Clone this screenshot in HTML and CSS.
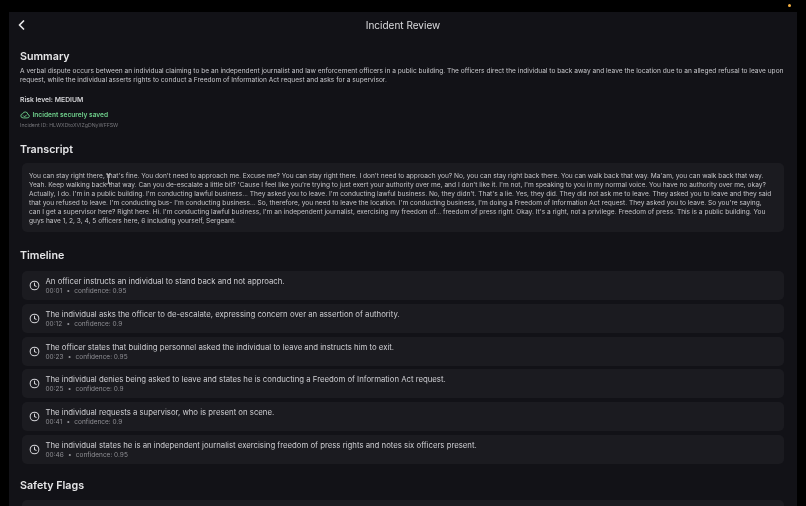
FILE: index.html
```html
<!DOCTYPE html>
<html lang="en">
<head>
<meta charset="utf-8">
<title>Incident Review</title>
<link rel="stylesheet" href="styles.css">
</head>
<body>
<span class="status-dot"></span>
<main class="panel">
  <header class="topbar">
    <svg class="back" viewBox="0 0 7 10" width="7" height="10"><path d="M5.5 1 1.5 5l4 4" fill="none" stroke="#e8e8ea" stroke-width="1.7" stroke-linecap="round" stroke-linejoin="round"/></svg>
    <h1 class="title">Incident Review</h1>
  </header>
  <section class="summary">
    <h2 class="heading">Summary</h2>
    <p class="summary-text">A verbal dispute occurs between an individual claiming to be an independent journalist and law enforcement officers in a public building. The officers direct the individual to back away and leave the location due to an alleged refusal to leave upon request, while the individual asserts rights to conduct a Freedom of Information Act request and asks for a supervisor.</p>
    <p class="risk">Risk level: MEDIUM</p>
    <div class="saved">
      <svg viewBox="0 0 24 24" width="10" height="10" fill="none" stroke="#6fd08c" stroke-width="2.2" stroke-linecap="round" stroke-linejoin="round"><path d="M7 19a5 5 0 0 1-.6-9.96A6.5 6.5 0 0 1 19 10.5a4.3 4.3 0 0 1-1 8.5z"/><path d="m8.5 14 2.5 2.5 4.5-4.5"/></svg>
      <span>Incident securely saved</span>
    </div>
    <p class="incident-id">Incident ID: HLWXDtoXVIZgDNyWFFSW</p>
  </section>
  <section class="transcript">
    <h2 class="heading">Transcript</h2>
    <div class="card transcript-card">You can stay right there, that's fine. You don't need to approach me. Excuse me? You can stay right there. I don't need to approach you? No, you can stay right back there. You can walk back that way. Ma'am, you can walk back that way. Yeah. Keep walking back that way. Can you de-escalate a little bit? 'Cause I feel like you're trying to just exert your authority over me, and I don't like it. I'm not, I'm speaking to you in my normal voice. You have no authority over me, okay? Actually, I do. I'm in a public building. I'm conducting lawful business... They asked you to leave. I'm conducting lawful business. No, they didn't. That's a lie. Yes, they did. They did not ask me to leave. They asked you to leave and they said that you refused to leave. I'm conducting bus- I'm conducting business... So, therefore, you need to leave the location. I'm conducting business, I'm doing a Freedom of Information Act request. They asked you to leave. So you're saying, can I get a supervisor here? Right here. Hi. I'm conducting lawful business, I'm an independent journalist, exercising my freedom of... freedom of press right. Okay. It's a right, not a privilege. Freedom of press. This is a public building. You guys have 1, 2, 3, 4, 5 officers here, 6 including yourself, Sergeant.</div>
  </section>
  <section class="timeline">
    <h2 class="heading">Timeline</h2>
    <ul class="events">
      <li class="card event">
        <svg class="clock" viewBox="0 0 24 24"><circle cx="12" cy="12" r="9.5"/><path d="M12 6.5V12l3.5 2"/></svg>
        <div><p class="event-text">An officer instructs an individual to stand back and not approach.</p><p class="event-meta"><span>00:01</span><span>•</span><span>confidence: 0.95</span></p></div>
      </li>
      <li class="card event">
        <svg class="clock" viewBox="0 0 24 24"><circle cx="12" cy="12" r="9.5"/><path d="M12 6.5V12l3.5 2"/></svg>
        <div><p class="event-text">The individual asks the officer to de-escalate, expressing concern over an assertion of authority.</p><p class="event-meta"><span>00:12</span><span>•</span><span>confidence: 0.9</span></p></div>
      </li>
      <li class="card event">
        <svg class="clock" viewBox="0 0 24 24"><circle cx="12" cy="12" r="9.5"/><path d="M12 6.5V12l3.5 2"/></svg>
        <div><p class="event-text">The officer states that building personnel asked the individual to leave and instructs him to exit.</p><p class="event-meta"><span>00:23</span><span>•</span><span>confidence: 0.95</span></p></div>
      </li>
      <li class="card event">
        <svg class="clock" viewBox="0 0 24 24"><circle cx="12" cy="12" r="9.5"/><path d="M12 6.5V12l3.5 2"/></svg>
        <div><p class="event-text">The individual denies being asked to leave and states he is conducting a Freedom of Information Act request.</p><p class="event-meta"><span>00:25</span><span>•</span><span>confidence: 0.9</span></p></div>
      </li>
      <li class="card event">
        <svg class="clock" viewBox="0 0 24 24"><circle cx="12" cy="12" r="9.5"/><path d="M12 6.5V12l3.5 2"/></svg>
        <div><p class="event-text">The individual requests a supervisor, who is present on scene.</p><p class="event-meta"><span>00:41</span><span>•</span><span>confidence: 0.9</span></p></div>
      </li>
      <li class="card event">
        <svg class="clock" viewBox="0 0 24 24"><circle cx="12" cy="12" r="9.5"/><path d="M12 6.5V12l3.5 2"/></svg>
        <div><p class="event-text">The individual states he is an independent journalist exercising freedom of press rights and notes six officers present.</p><p class="event-meta"><span>00:46</span><span>•</span><span>confidence: 0.95</span></p></div>
      </li>
    </ul>
  </section>
  <section class="flags">
    <h2 class="heading">Safety Flags</h2>
    <div class="card flag-card"></div>
  </section>
</main>
<svg class="cursor" viewBox="0 0 7 12" width="7" height="12"><path d="M1 .8c1 0 2 .3 2.500 1 .5-.7 1.500-1 2.500-1M3.500 1.800v8.400M1 11.200c1 0 2-.3 2.500-1 .5.700 1.500 1 2.500 1" fill="none" stroke="#c9c9cc" stroke-width=".8"/></svg>
</body>
</html>
```

FILE: styles.css
```css
* { box-sizing: border-box; margin: 0; padding: 0; }
html, body { width: 806px; height: 506px; overflow: hidden; }
body { background: #000; padding: 12px 9px 0; font-family: Inter, "Liberation Sans", sans-serif; color: #d0d0d4; position: relative; }
.status-dot { position: absolute; left: 787.5px; top: 3.5px; width: 3px; height: 3px; border-radius: 50%; background: #f5b041; }
.cursor { position: absolute; left: 105px; top: 173px; }
.panel { width: 788px; height: 494px; background: #121217; padding: 0 11px; overflow: hidden; filter: blur(.3px); }
.topbar { height: 26px; position: relative; display: flex; align-items: center; justify-content: center; margin-bottom: 12px; }
.back { position: absolute; left: -2px; top: 8px; }
.title { font-size: 10px; font-weight: 400; color: #dcdcdf; }
.heading { font-size: 10.7px; line-height: 14px; font-weight: 600; color: #e6e6e8; }
.summary-text { font-size: 6.6px; line-height: 9px; margin-top: 2.8px; color: #c8c8cc; }
.risk { font-size: 6.8px; line-height: 9px; font-weight: 600; margin-top: 10.5px; color: #d6d6d9; }
.saved { display: flex; align-items: center; gap: 2.5px; margin-top: 6px; font-size: 6.6px; line-height: 10px; font-weight: 600; color: #6fd08c; }
.incident-id { font-size: 5.2px; line-height: 7px; margin-top: 1.5px; color: #77777c; }
.transcript { margin-top: 14.2px; }
.card { background: #1b1b20; border-radius: 5px; margin-left: 2px; margin-right: 2px; }
.transcript-card { margin-top: 6px; height: 69px; padding: 9px 10.5px 0 7px; font-size: 6.58px; line-height: 9.1px; color: #c4c4c8; }
.timeline { margin-top: 17px; }
.events { list-style: none; margin-top: 8px; display: flex; flex-direction: column; gap: 3.8px; }
.event { height: 29px; display: flex; align-items: center; gap: 5.5px; padding: 0 7px; }
.clock { width: 11px; height: 11px; flex: none; fill: none; stroke: #d4d4d8; stroke-width: 2.2; stroke-linecap: round; stroke-linejoin: round; }
.event-text { font-size: 7.77px; line-height: 10px; color: #cfcfd3; }
.event-meta { display: flex; gap: 4.2px; font-size: 6.5px; line-height: 8px; margin-top: 1px; color: #8f8f94; }
.flags { margin-top: 15px; }
.flag-card { margin-top: 7px; height: 40px; }
```
